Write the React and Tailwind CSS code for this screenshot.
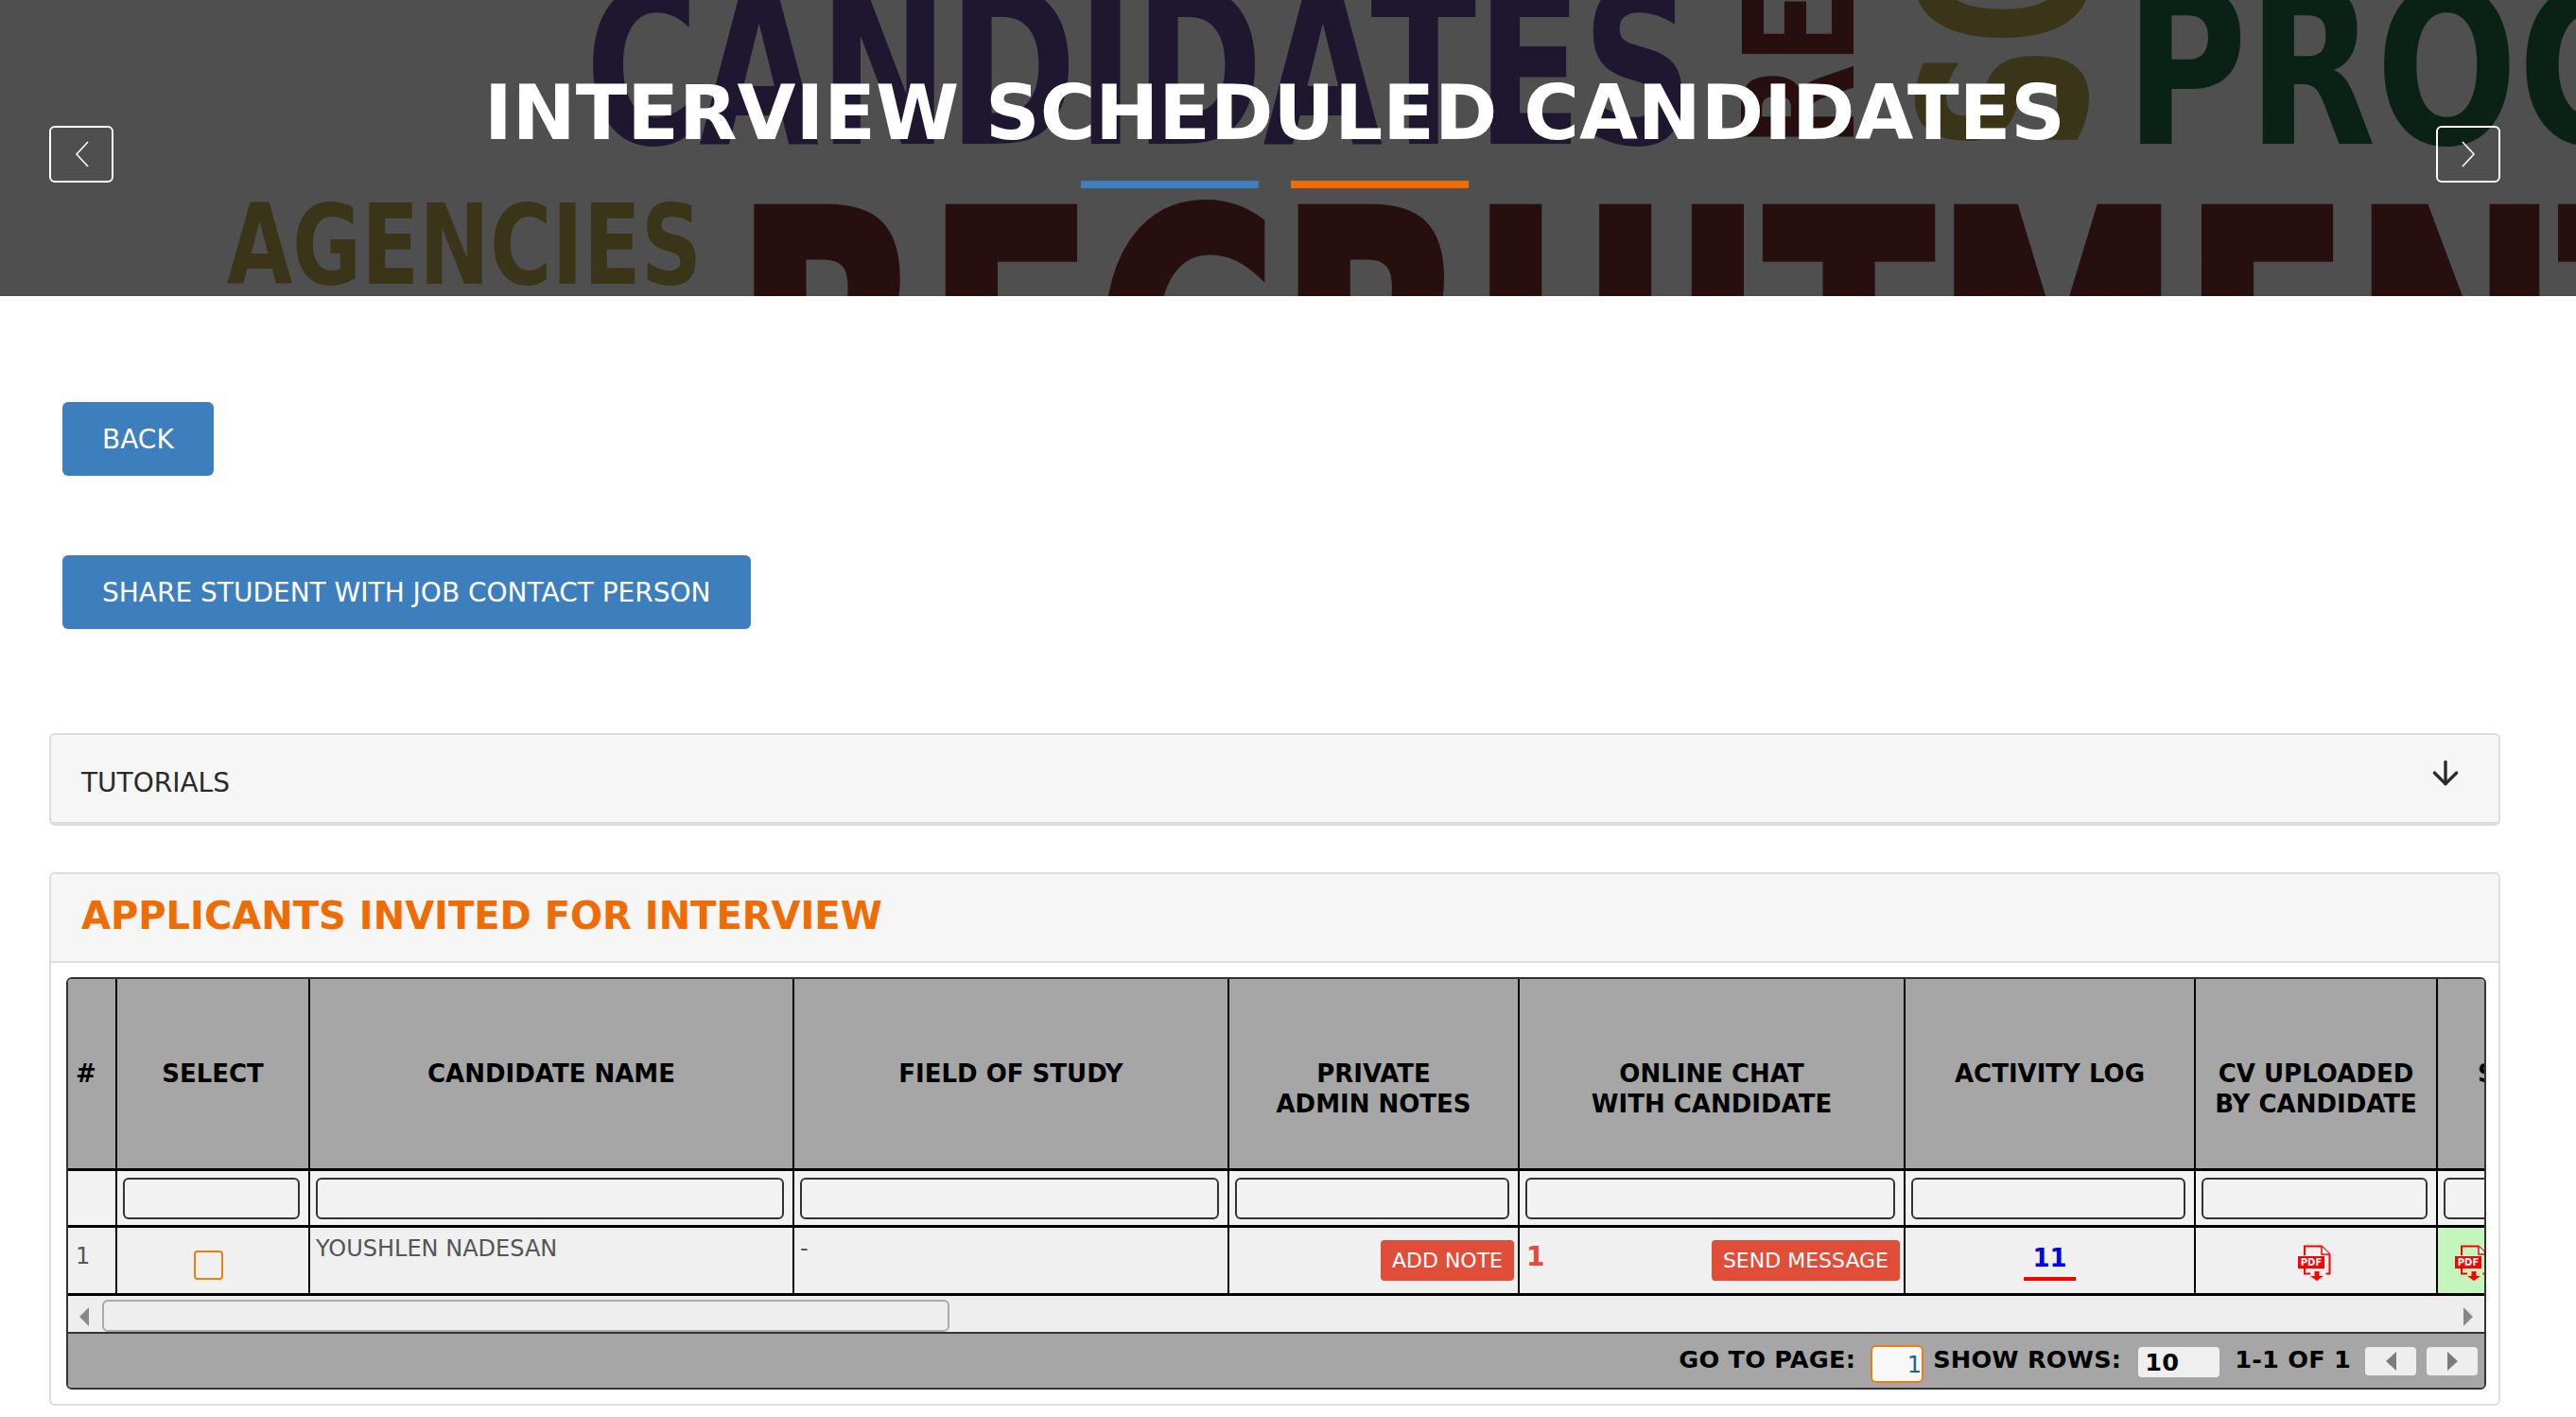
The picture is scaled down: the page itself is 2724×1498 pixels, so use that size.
import { ArrowDown } from 'lucide-react'

const heavy = '"DejaVu Sans", sans-serif'

function HeroBackdrop() {
  return (
    <svg className="absolute inset-0" width="2724" height="313" viewBox="0 0 2724 313" style={{ fontFamily: heavy, fontWeight: 700 }}>
      <text x="619" y="152" fontSize="228" fill="#1f1730" textLength="1172" lengthAdjust="spacingAndGlyphs">CANDIDATES</text>
      <text x="2247" y="152" fontSize="228" fill="#0a2115" textLength="545" lengthAdjust="spacingAndGlyphs">PROC</text>
      <text x="240" y="300" fontSize="118" fill="#3a3518" textLength="502" lengthAdjust="spacingAndGlyphs">AGENCIES</text>
      <text x="776" y="491" fontSize="372" fill="#280f0f" stroke="#280f0f" strokeWidth="8" textLength="2110" lengthAdjust="spacingAndGlyphs">RECRUITMENT</text>
      <text transform="translate(1960 155) rotate(-90)" fontSize="162" fill="#280f0f" textLength="165" lengthAdjust="spacingAndGlyphs">RE</text>
      <text transform="translate(2206 160) rotate(-90)" fontSize="242" fill="#3a3518" textLength="245" lengthAdjust="spacingAndGlyphs">SO</text>
    </svg>
  )
}

function Chevron({ right }) {
  return (
    <svg width="15" height="28" viewBox="0 0 15 28" fill="none" stroke="white" strokeWidth="1.6">
      <polyline points={right ? '1,1 13,14 1,27' : '14,1 2,14 14,27'} />
    </svg>
  )
}

function HeroNavButton({ right, className }) {
  return (
    <button className={`absolute top-[133px] flex h-[60px] w-[68px] items-center justify-center rounded-md border-2 border-white ${className}`}>
      <Chevron right={right} />
    </button>
  )
}

function PdfIcon() {
  return (
    <svg width="35" height="38" viewBox="0 0 35 38" className="block">
      <path d="M7 11V1.500h18l8.500 8.500V30.500h-4M7 25v5.500h6" fill="none" stroke="#ff0000" strokeWidth="2" />
      <path d="M25 1.500v8.500h8.500" fill="#fff" stroke="#ff0000" strokeWidth="1.500" />
      <rect x="0" y="12" width="28" height="13" fill="#ff0000" />
      <text x="14" y="22" textAnchor="middle" fontSize="10" fontWeight="700" fill="#fff" style={{ fontFamily: heavy }}>PDF</text>
      <path d="M17.500 28h5v5h4.500l-7 5-7-5h4.500z" fill="#ff0000" />
    </svg>
  )
}

function ScrollArrow({ right }) {
  return (
    <svg width="12" height="20" viewBox="0 0 12 20" className="block shrink-0">
      <polygon points={right ? '1,0 11,10 1,20' : '11,0 1,10 11,20'} fill="#888888" />
    </svg>
  )
}

function PagerButton({ right }) {
  return (
    <div className="mt-[14px] flex h-[30px] w-[54px] items-center justify-center rounded bg-[#eeeeee]">
      <svg width="11" height="20" viewBox="0 0 11 20">
        <polygon points={right ? '0,0 11,10 0,20' : '11,0 0,10 11,20'} fill="#7b7b7b" />
      </svg>
    </div>
  )
}

const headers = [
  { label: '#', className: 'text-left pl-[8px]' },
  { label: 'SELECT' },
  { label: 'CANDIDATE NAME' },
  { label: 'FIELD OF STUDY' },
  { label: ['PRIVATE', 'ADMIN NOTES'] },
  { label: ['ONLINE CHAT', 'WITH CANDIDATE'] },
  { label: 'ACTIVITY LOG' },
  { label: ['CV UPLOADED', 'BY CANDIDATE'] },
  { label: 'S', className: 'text-left pl-[42px]' },
]

const colWidths = [52, 204, 512, 460, 307, 408, 307, 256, 300]

const thClass = 'h-[203px] border-r-2 border-b-[3px] border-black bg-[#a6a6a6] pt-[84px] align-top text-[26px] leading-[32px] font-bold text-black'
const filterCell = 'h-[60px] border-r-2 border-b-[3px] border-black bg-[#f2f2f2] pt-[7px] pr-[9px] pl-[6px] align-top'
const dataCell = 'h-[72px] border-r-2 border-b-[3px] border-black align-top text-[24px] leading-[32px] text-[#555555]'
const greyCell = `${dataCell} bg-[#f0f0f0]`
const redButton = 'h-[43px] rounded bg-[#e04e3a] px-[12px] text-[22px] text-white'

function ApplicantsTable() {
  return (
    <div className="overflow-hidden rounded-md border-2 border-[#333333]">
      <table className="w-[2806px] table-fixed border-separate border-spacing-0">
        <colgroup>
          {colWidths.map((w, i) => (
            <col key={i} style={{ width: w }} />
          ))}
        </colgroup>
        <thead>
          <tr>
            {headers.map((h, i) => (
              <th key={i} className={`${thClass} ${h.className || 'text-center'}`}>
                {Array.isArray(h.label) ? h.label.map((line) => <div key={line}>{line}</div>) : h.label}
              </th>
            ))}
          </tr>
          <tr>
            {headers.map((h, i) => (
              <th key={i} className={filterCell}>
                {i > 0 && (
                  <input readOnly className="block h-[44px] w-full rounded-md border-2 border-[#333333] bg-[#f2f2f2]" />
                )}
              </th>
            ))}
          </tr>
        </thead>
        <tbody>
          <tr>
            <td className={`${greyCell} pt-[14px] pl-[8px]`}>1</td>
            <td className={`${greyCell} pt-[24px] pl-[81px]`}>
              <div className="h-[31px] w-[31px] rounded border-2 border-[#e8810c]" />
            </td>
            <td className={`${greyCell} pt-[6px] pl-[6px]`}>YOUSHLEN NADESAN</td>
            <td className={`${greyCell} pt-[6px] pl-[6px]`}>-</td>
            <td className={`${greyCell} pt-[13px] pr-[4px] text-right`}>
              <button className={redButton}>ADD NOTE</button>
            </td>
            <td className={`${greyCell} pt-[13px] pr-[4px] pl-[7px]`}>
              <div className="flex items-start justify-between">
                <span className="text-[28px] leading-[35px] font-bold text-[#e04e3a]">1</span>
                <button className={redButton}>SEND MESSAGE</button>
              </div>
            </td>
            <td className={`${greyCell} pt-[13px]`}>
              <div className="mx-auto h-[43px] w-[55px] border-b-4 border-[#ff0000] text-center text-[26px] leading-[38px] font-bold text-[#0000ff]">
                11
              </div>
            </td>
            <td className={`${greyCell} pt-[18px] pl-[108px]`}>
              <PdfIcon />
            </td>
            <td className={`${dataCell} bg-[#c4f5bd] pt-[18px] pl-[18px]`}>
              <PdfIcon />
            </td>
          </tr>
        </tbody>
      </table>

      {/* scrollbar */}
      <div className="flex h-[38px] items-center bg-[#eeeeee] pt-[6px]">
        <div className="ml-[11px]">
          <ScrollArrow />
        </div>
        <div className="ml-[13px] h-[34px] w-[896px] self-end rounded-md border-2 border-[#aaaaaa] bg-[#eeeeee]" />
        <div className="mr-[11px] ml-auto">
          <ScrollArrow right />
        </div>
      </div>

      {/* pager */}
      <div className="flex h-[59px] items-start justify-end border-t-2 border-[#333333] bg-[#a6a6a6] pr-[7px] text-[25.6px] leading-[32px] font-bold tracking-[0.2px] text-black">
        <span className="mt-[11px]">GO TO PAGE:</span>
        <input
          readOnly
          value="1"
          className="mt-[12px] ml-[16px] h-[40px] w-[56px] rounded-md border-2 border-[#e8810c] bg-[#f8f8f8] pt-[2px] text-right text-[24px] font-normal text-[#1f5f99]"
        />
        <span className="mt-[11px] ml-[10px]">SHOW ROWS:</span>
        <div className="mt-[14px] ml-[18px] h-[32px] w-[86px] rounded bg-[#efefef] pl-[7px]">10</div>
        <span className="mt-[11px] ml-[16px]">1-1 OF 1</span>
        <div className="ml-[15px]">
          <PagerButton />
        </div>
        <div className="ml-[11px]">
          <PagerButton right />
        </div>
      </div>
    </div>
  )
}

export default function App() {
  return (
    <div className="min-h-screen overflow-hidden bg-white" style={{ fontFamily: heavy }}>
      {/* Banner */}
      <header className="relative h-[313px] overflow-hidden bg-[#4f4f4f]">
        <HeroBackdrop />
        <div className="relative pt-[72px] pr-[28px] text-center">
          <h1 className="text-[80px] leading-[96px] font-bold text-white">INTERVIEW SCHEDULED CANDIDATES</h1>
          <div className="mt-[23px] flex justify-center gap-[34px]">
            <span className="h-[8px] w-[188px] bg-[#3d7ebd]" />
            <span className="h-[8px] w-[188px] bg-[#ef6c05]" />
          </div>
        </div>
        <HeroNavButton className="left-[52px]" />
        <HeroNavButton right className="left-[2576px]" />
      </header>

      <main className="w-[2696px] px-[52px] pb-[12px]">
        <div className="pt-[112px] pl-[14px]">
          <button className="h-[78px] rounded-md bg-[#3d7ebd] px-[42px] pt-[2px] text-[28px] text-white">BACK</button>
        </div>
        <div className="pt-[84px] pl-[14px]">
          <button className="h-[78px] rounded-md bg-[#3d7ebd] pt-[2px] pr-[43px] pl-[42px] text-[28px] text-white">
            SHARE STUDENT WITH JOB CONTACT PERSON
          </button>
        </div>

        {/* Tutorials */}
        <section className="mt-[110px] flex h-[98px] items-start justify-between rounded-md border-2 border-b-4 border-[#dddddd] bg-[#f6f6f6] pl-[32px]">
          <span className="mt-[35px] text-[28px] leading-[32px] text-[#2a2a2a]">TUTORIALS</span>
          <ArrowDown size={40} strokeWidth={2} color="#2a2a2a" className="mt-[20px] mr-[36px]" />
        </section>

        {/* Applicants */}
        <section className="mt-[49px] rounded-md border-2 border-[#dddddd] bg-white">
          <div className="h-[94px] rounded-t-md border-b-2 border-[#dddddd] bg-[#f6f6f6] pt-[20px] pl-[32px]">
            <h2 className="text-[40px] leading-[48px] font-bold text-[#ef6c05]">APPLICANTS INVITED FOR INTERVIEW</h2>
          </div>
          <div className="pt-[15px] pr-[13px] pb-[15px] pl-[16px]">
            <ApplicantsTable />
          </div>
        </section>
      </main>
    </div>
  )
}
